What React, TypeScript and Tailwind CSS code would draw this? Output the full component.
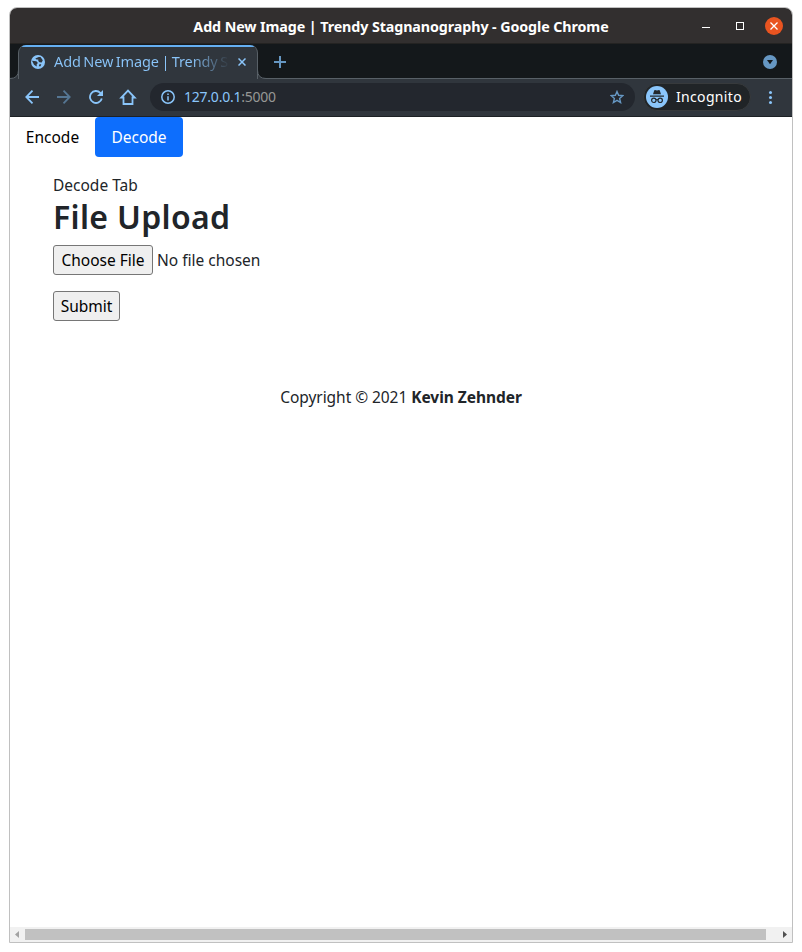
import React from 'react';

function TitleBar() {
  return (
    <header className="relative flex h-9 shrink-0 items-center justify-end border-b border-[#242322] bg-[#322f2f] text-white">
      <h1 className="absolute inset-x-0 top-[7px] text-center text-[14.3px] font-bold leading-6 tracking-[-0.1px] text-white">
        <span>Add New Image | Trendy Stagnanography - Google Chrome</span>
      </h1>
      <div className="relative flex items-center pr-[9px]">
        <div className="mt-[3px] mr-[26px] h-px w-2 bg-white" />
        <div className="mr-[21px] h-2 w-2 border border-white" />
        <div className="flex h-[18px] w-[18px] items-center justify-center rounded-full bg-[#e95420]">
          <svg width="8" height="8" viewBox="0 0 8 8" stroke="white" strokeWidth="1.3">
            <path d="M.5.5l7 7M7.5.5l-7 7" />
          </svg>
        </div>
      </div>
    </header>
  );
}

function TabStrip() {
  return (
    <div className="flex h-[35px] shrink-0 bg-[#14181b]">
      <div className="w-2 border-b border-[#586067]">
        <svg className="mt-[26px] block" width="9" height="9" viewBox="0 0 9 9">
          <path d="M9 0v9H0v-.5Q8.5 8.5 8.5 0" fill="#30363d" />
          <path d="M0 8.5Q8.5 8.5 8.5 0" fill="none" stroke="#586067" />
        </svg>
      </div>
      <div className="relative mt-px flex h-[34px] w-[240px] items-center overflow-hidden rounded-t-[8px] border-x border-[#586067] bg-[#30363d] pl-3">
        <div className="absolute inset-x-0 top-0 h-[2px] bg-[#65aff2]" />
        <svg className="shrink-0" width="14" height="14" viewBox="0 0 14 14">
          <circle cx="7" cy="7" r="7" fill="#8ac5fa" />
          <path d="M7.7 2.1h1.8l2.3 3.2-1.1 2.2-2.2-.3L7.3 6V4.6H5.5L4.3 3.5M1 5.8l4.4.4 1.5 1.8-1.2 1.3v2.1L3 9.7" fill="#30363d" />
          <path d="M8.4 9.3h1.9l-.8 2H7.8z" fill="#30363d" />
        </svg>
        <span className="-mt-0.5 ml-[9px] w-[176px] shrink-0 whitespace-nowrap bg-gradient-to-r from-[#8ac5fa] from-[78%] to-[#30363d] bg-clip-text text-[14.5px] leading-6 tracking-[-0.1px] text-transparent [word-spacing:-1.2px]">
          Add New Image | Trendy S
        </span>
        <svg className="ml-[8px] shrink-0" width="8" height="8" viewBox="0 0 8 8" stroke="#8ac5fa" strokeWidth="1.5">
          <path d="M.5.5l7 7M7.5.5l-7 7" />
        </svg>
      </div>
      <div className="flex flex-1 items-center border-b border-[#586067] pr-[15px]">
        <svg className="-ml-px mt-[26px]" width="9" height="9" viewBox="0 0 9 9">
          <path d="M0 0v9h9v-.5Q.5 8.5.5 0" fill="#30363d" />
          <path d="M.5 0Q.5 8.5 9 8.5" fill="none" stroke="#586067" />
        </svg>
        <svg className="ml-2 mt-[2px]" width="12" height="12" viewBox="0 0 12 12" stroke="#6697c3" strokeWidth="2">
          <path d="M6 0v12M0 6h12" />
        </svg>
        <svg className="ml-auto mt-[2px]" width="14" height="14" viewBox="0 0 14 14">
          <circle cx="7" cy="7" r="7" fill="#6697c3" />
          <path d="M4 5h6L7 9.3z" fill="#14181b" />
        </svg>
      </div>
    </div>
  );
}

function Toolbar() {
  return (
    <div className="flex h-[38px] shrink-0 items-center border-b border-[#1d2125] bg-[#30363d] pb-px pl-[15px]">
      <svg width="14" height="14" viewBox="0 0 14 14" fill="none" stroke="#8ac5fa" strokeWidth="1.8">
        <path d="M14 7H1.5M7.5.7L1.3 7l6.2 6.3" />
      </svg>
      <svg className="ml-[18px]" width="14" height="14" viewBox="0 0 14 14" fill="none" stroke="#557693" strokeWidth="1.8">
        <path d="M0 7h12.5M6.5.7L12.7 7l-6.2 6.3" />
      </svg>
      <svg className="ml-[18px]" width="14" height="14" viewBox="0 0 14 14" fill="none" stroke="#8ac5fa" strokeWidth="1.8">
        <path d="M12.8 8.5A6 6 0 1 1 11.3 2.8L12 3.5" />
        <path d="M14 0v6H8z" fill="#8ac5fa" stroke="none" />
      </svg>
      <svg className="ml-4" width="18" height="16" viewBox="0 0 18 16" fill="none" stroke="#8ac5fa" strokeWidth="1.8">
        <path d="M2.3 8.5H4.5V15h9V8.5h2.2L9 1.6z" />
      </svg>
      <div className="ml-[13px] flex h-7 w-[485px] items-center rounded-full bg-[#23272e] pl-[11px] pr-[11px]">
        <svg width="14" height="14" viewBox="0 0 14 14" fill="none" stroke="#8ac5fa" strokeWidth="1.5">
          <circle cx="7" cy="7" r="6.2" />
          <path d="M7 6.2v4.3M7 3.4v1.5" />
        </svg>
        <span className="-mt-px ml-[9px] text-[14px] leading-6 tracking-[-0.23px] text-[#8ac5fa]">
          127.0.0.1<span className="text-[#969795]">:5000</span>
        </span>
        <svg className="ml-auto" width="14" height="14" viewBox="0 0 14 14" fill="none" stroke="#6697c3" strokeWidth="1.4">
          <path d="M7 1.5l1.6 3.8 4.2.4-3.2 2.7 1 4.1L7 10.3l-3.6 2.2 1-4.1-3.2-2.7 4.2-.4z" />
        </svg>
      </div>
      <div className="ml-2 flex h-[28px] w-[108px] items-center rounded-full border border-[#373a3c] bg-[#202427] pl-0.5">
        <svg width="22" height="22" viewBox="0 0 22 22">
          <circle cx="11" cy="11" r="11" fill="#8ac5fa" />
          <path d="M7 8.2l1.2-3.7q.3-.5.8-.4l2 .5 2-.5q.5-.1.8.4L15 8.2zM4 9.5h14v1.2H4z" fill="#23282d" />
          <g fill="none" stroke="#23282d" strokeWidth="1.2">
            <circle cx="7.8" cy="14.3" r="2.2" />
            <circle cx="14.2" cy="14.3" r="2.2" />
            <path d="M10 14q1-.7 2 0" />
          </g>
        </svg>
        <span className="-mt-px ml-2 text-[14px] leading-6 tracking-[0.33px] text-white">Incognito</span>
      </div>
      <div className="ml-[18px] flex flex-col gap-[2px]">
        <i className="h-[3px] w-[3px] rounded-full bg-[#8ac5fa]" />
        <i className="h-[3px] w-[3px] rounded-full bg-[#8ac5fa]" />
        <i className="h-[3px] w-[3px] rounded-full bg-[#8ac5fa]" />
      </div>
    </div>
  );
}

function DecodePage() {
  return (
    <main className="flex-1 text-base leading-6 text-[#212529]">
      <nav className="flex h-10">
        <button className="w-[85px] whitespace-nowrap text-[15.5px] text-black">Encode</button>
        <button className="w-[88px] whitespace-nowrap rounded bg-[#0d6efd] text-[15.5px] text-white">Decode</button>
      </nav>
      <section className="px-[43px] pt-4">
        <p className="text-[15.5px] leading-6">Decode Tab</p>
        <h2 className="text-[32px] font-semibold leading-10 tracking-[0.32px]">File Upload</h2>
        <div className="mt-2 flex h-[30px] items-center">
          <button className="h-[30px] w-[100px] whitespace-nowrap rounded-[3px] border border-[#767676] bg-[#efefef] text-[15.5px] text-black">
            Choose File
          </button>
          <span className="ml-1 text-[15.5px]">No file chosen</span>
        </div>
        <button className="mt-4 block h-[30px] w-[67px] rounded-[3px] border border-[#767676] bg-[#efefef] text-[15.5px] leading-6 text-black">
          Submit
        </button>
      </section>
      <footer className="mt-16 text-center text-[15.5px] leading-6 tracking-[-0.05px]">
        <span>Copyright © 2021 </span><strong className="font-bold">Kevin Zehnder</strong>
      </footer>
    </main>
  );
}

function ScrollBar() {
  return (
    <div className="flex h-[15px] shrink-0 items-center bg-[#f1f1f1]">
      <svg className="ml-[5px]" width="4" height="7" viewBox="0 0 4 7" fill="#a3a3a3">
        <path d="M4 0v7L0 3.5z" />
      </svg>
      <div className="ml-1.5 mt-0.5 h-[11px] w-[741px] self-start bg-[#c1c1c1]" />
      <svg className="ml-[17px]" width="4" height="7" viewBox="0 0 4 7" fill="#505050">
        <path d="M0 0v7l4-3.5z" />
      </svg>
    </div>
  );
}

export default function App() {
  return (
    <div className="h-[952px] w-[802px] overflow-hidden bg-white pl-[9px] pt-[7px] font-['Noto_Sans',sans-serif]">
      <div className="flex h-[936px] w-[784px] flex-col overflow-hidden rounded-t-[8px] border border-[#c0c0c0] bg-white">
        <TitleBar />
        <TabStrip />
        <Toolbar />
        <DecodePage />
        <ScrollBar />
      </div>
    </div>
  );
}
